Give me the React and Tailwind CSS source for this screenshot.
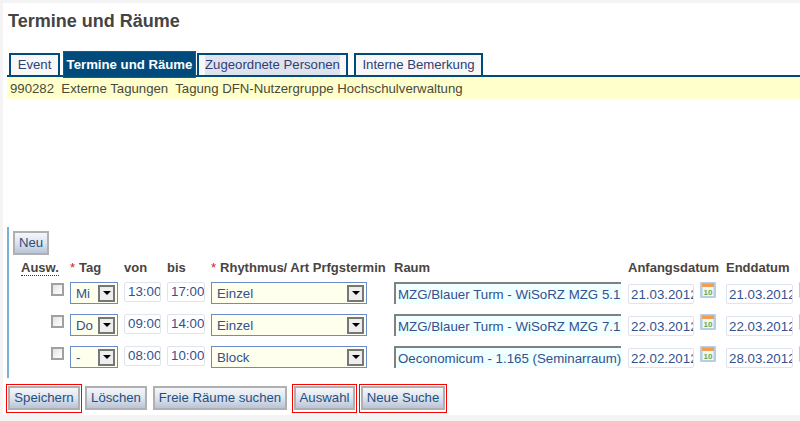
import React from "react";

const ROWS = [
  { tag: "Mi", von: "13:00", bis: "17:00", art: "Einzel", raum: "MZG/Blauer Turm - WiSoRZ MZG 5.1", start: "21.03.2012", end: "21.03.2012" },
  { tag: "Do", von: "09:00", bis: "14:00", art: "Einzel", raum: "MZG/Blauer Turm - WiSoRZ MZG 7.1", start: "22.03.2012", end: "22.03.2012" },
  { tag: "-", von: "08:00", bis: "10:00", art: "Block", raum: "Oeconomicum - 1.165 (Seminarraum)", start: "22.02.2012", end: "28.03.2012" },
];

function Tab({ children, width, active, shaded }) {
  if (active) {
    return (
      <div className={`${width} relative z-10 -mb-[3px] border border-[#ff0000] bg-[#004a7c] h-[27px] flex items-center justify-center text-white font-bold text-[13.2px] whitespace-nowrap`}>
        {children}
      </div>
    );
  }
  return (
    <div className={`${width} h-[22px] flex items-center justify-center border-2 border-b-0 border-[#004a7c] bg-[#f7f7f7] text-[13.2px] text-[#2f3f78] whitespace-nowrap`}>
      <span className={shaded ? "bg-[#dfe3ee]" : ""}>{children}</span>
    </div>
  );
}

function Arrow() {
  return (
    <div className="w-[17px] h-[17px] border-2 border-[#777777] bg-[#eeeeee] flex items-center justify-center shrink-0">
      <div className="w-0 h-0 border-x-[4px] border-x-transparent border-t-[4px] border-t-black" />
    </div>
  );
}

function Select({ value, width }) {
  return (
    <div className={`${width} h-[22px] border border-[#6a8cc8] bg-[#ffffee] flex items-center justify-between pl-[5px] pr-[1px] text-[13.3px] text-[#34508f]`}>
      <span className="pt-[1px]">{value}</span>
      <div className="mr-[1px]"><Arrow /></div>
    </div>
  );
}

function TimeBox({ value, width, inset }) {
  return (
    <div className={`${width} ${inset} h-[20px] border border-[#dfe5ee] rounded-[2px] bg-white flex items-center text-[13.3px] text-[#34508f] overflow-hidden whitespace-nowrap`}>
      {value}
    </div>
  );
}

function Calendar({ className }) {
  return (
    <svg width="16" height="16" viewBox="0 0 16 16" className={className}>
      <rect x="0" y="0" width="16" height="16" rx="1" fill="#b4cdea" />
      <rect x="2" y="1.5" width="12" height="3.5" fill="#f29d4f" />
      <rect x="2.5" y="5" width="11" height="9" fill="#f4f7ee" />
      <text x="8" y="12.5" textAnchor="middle" fontSize="8" fontWeight="700" fill="#64a84c" fontFamily="Liberation Sans, sans-serif">10</text>
    </svg>
  );
}

function Button({ children, width, marked }) {
  const btn = (
    <button className={`${width} h-[24px] border-2 border-[#b0b0b0] bg-gradient-to-b from-[#f4f6fa] via-[#dfe4ed] to-[#b9c4d8] text-[13.2px] text-[#1f4f80] whitespace-nowrap flex items-center justify-center`}>
      {children}
    </button>
  );
  if (!marked) return btn;
  return <div className="border border-[#ff0000] p-[1px] pb-[2px]">{btn}</div>;
}

function Head({ children, star }) {
  return (
    <div className="pt-[2px] font-bold text-[13px] leading-[15px] text-[#4a4440] whitespace-nowrap">
      {star && <span className="text-[#d02020] font-normal mr-[4px]">*</span>}
      {children}
    </div>
  );
}

export default function App() {
  return (
    <div className="w-[800px] h-[421px] overflow-hidden bg-[#f4f4f4] pt-[3px] pl-[3px] font-['Liberation_Sans',Arial,sans-serif]">
      <div className="bg-white h-[412px] flex flex-col">
        <h1 className="mt-[8px] ml-[5px] h-[20px] text-[18px] leading-[20px] font-bold text-[#444444]">Termine und Räume</h1>

        <div className="mt-[17px] ml-[6px] flex items-end h-[27px]">
          <Tab width="w-[51px]">Event</Tab>
          <div className="ml-[3px]"><Tab active width="w-[133px]">Termine und Räume</Tab></div>
          <div className="ml-[1px]"><Tab shaded width="w-[151px]">Zugeordnete Personen</Tab></div>
          <div className="ml-[6px]"><Tab width="w-[129px]">Interne Bemerkung</Tab></div>
        </div>
        <div className="ml-[4px] h-[2px] bg-[#004a7c]" />
        <div className="ml-[4px] h-[22px] bg-[#ffffcc] pl-[3px] pt-[1px] flex items-center text-[13.2px] text-[#4a4a3a] whitespace-pre">
          990282  Externe Tagungen  Tagung DFN-Nutzergruppe Hochschulverwaltung
        </div>

        <div className="mt-[128px] ml-[4px] h-[151px] border-l-2 border-[#7ab0d8] pl-[4px] pt-[4px]">
          <Button width="w-[36px]">Neu</Button>

          <div className="mt-[3px] ml-[8px] grid grid-cols-[49px_54px_43px_44px_183px_234px_98px_90px] grid-rows-[24px_32px_32px_32px] items-start">
            <div className="pt-[2px] flex items-start"><span className="font-bold text-[13px] leading-[15px] text-[#4a4440] border-b border-dotted border-[#333]">Ausw.</span></div>
            <Head star>Tag</Head>
            <Head>von</Head>
            <Head>bis</Head>
            <Head star>Rhythmus/ Art Prfgstermin</Head>
            <Head>Raum</Head>
            <Head>Anfangsdatum</Head>
            <Head>Enddatum</Head>

            {ROWS.map((r) => (
              <React.Fragment key={r.raum}>
                <div className="pl-[30px] pt-[1px]">
                  <div className="w-[13px] h-[13px] border-2 border-[#a0a0a0] bg-gradient-to-br from-[#e4e4e4] to-white" />
                </div>
                <Select value={r.tag} width="w-[48px]" />
                <TimeBox value={r.von} width="w-[37px]" inset="pl-[3px]" />
                <TimeBox value={r.bis} width="w-[38px]" inset="pl-[3px]" />
                <Select value={r.art} width="w-[156px]" />
                <div className="w-[227px] h-[22px] border-t-2 border-l-2 border-[#808080] bg-[#f0ffff] pl-[2px] pt-[1px] flex items-center text-[13.3px] text-[#34508f] overflow-hidden whitespace-nowrap">
                  {r.raum}
                </div>
                <div className="flex items-start gap-[6px]">
                  <div className="mt-[2px]"><TimeBox value={r.start} width="w-[66px]" inset="pl-[2px] pt-[1px]" /></div>
                  <Calendar />
                </div>
                <div className="flex items-start gap-[6px]">
                  <div className="mt-[2px]"><TimeBox value={r.end} width="w-[67px]" inset="pl-[2px] pt-[1px]" /></div>
                  <Calendar className="shrink-0" />
                </div>
              </React.Fragment>
            ))}
          </div>
        </div>

        <div className="mt-[6px] ml-[3px] flex items-start">
          <Button width="w-[72px]" marked>Speichern</Button>
          <div className="ml-[3px] mt-[2px]"><Button width="w-[62px]">Löschen</Button></div>
          <div className="ml-[6px] mt-[2px]"><Button width="w-[134px]">Freie Räume suchen</Button></div>
          <div className="ml-[5px]"><Button width="w-[61px]" marked>Auswahl</Button></div>
          <div className="ml-[2px]"><Button width="w-[84px]" marked>Neue Suche</Button></div>
        </div>
      </div>
    </div>
  );
}
